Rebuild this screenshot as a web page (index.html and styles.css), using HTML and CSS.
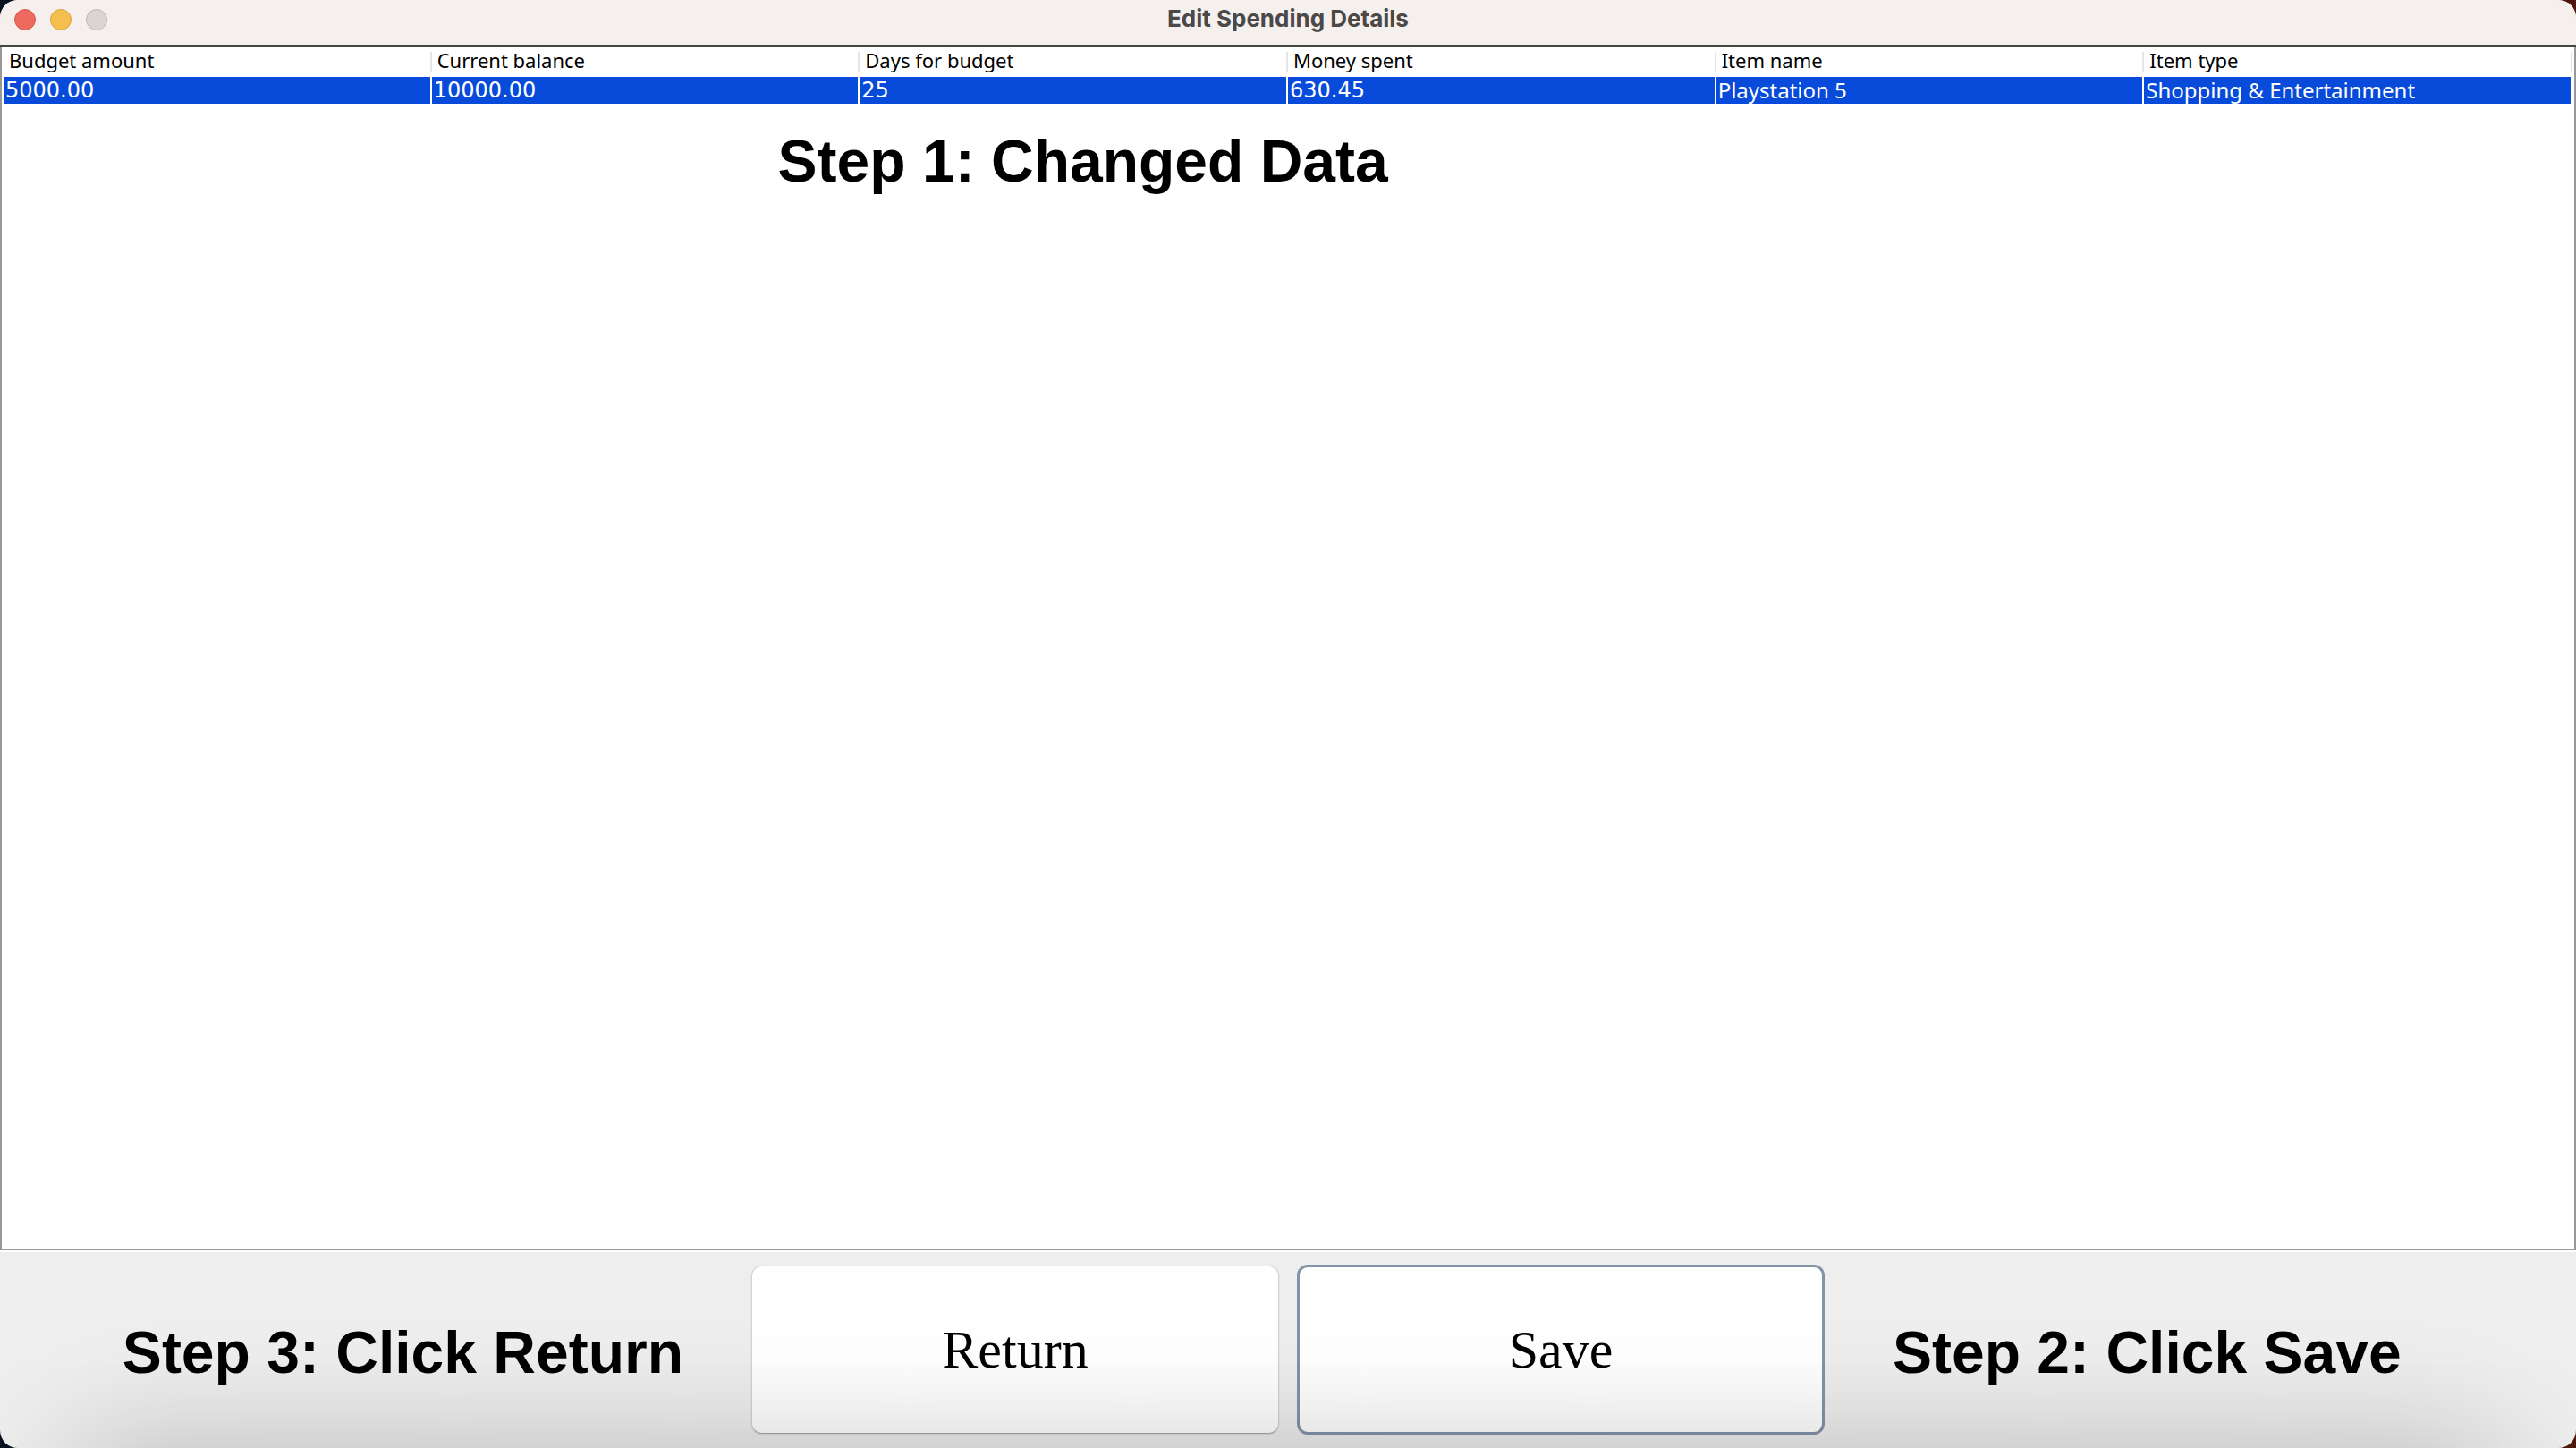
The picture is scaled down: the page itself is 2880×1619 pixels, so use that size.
FILE: index.html
```html
<!DOCTYPE html>
<html lang="en">
<head>
<meta charset="utf-8">
<title>Edit Spending Details</title>
<link rel="stylesheet" href="styles.css">
</head>
<body>
<div class="window">
  <header class="titlebar">
    <div class="controls">
      <button class="control control-close" type="button" aria-label="Close"></button>
      <button class="control control-minimize" type="button" aria-label="Minimize"></button>
      <button class="control control-zoom" type="button" aria-label="Zoom" disabled></button>
    </div>
    <h1 class="title">Edit Spending Details</h1>
  </header>
  <main class="content">
    <table class="spending">
      <thead>
        <tr>
          <th scope="col"><span class="label">Budget amount</span></th>
          <th scope="col"><span class="label">Current balance</span></th>
          <th scope="col"><span class="label">Days for budget</span></th>
          <th scope="col"><span class="label">Money spent</span></th>
          <th scope="col"><span class="label">Item name</span></th>
          <th scope="col"><span class="label">Item type</span></th>
        </tr>
      </thead>
      <tbody>
        <tr>
          <td class="number">5000.00</td>
          <td class="number">10000.00</td>
          <td class="number">25</td>
          <td class="number">630.45</td>
          <td>Playstation 5</td>
          <td>Shopping &amp; Entertainment</td>
        </tr>
      </tbody>
    </table>
    <p class="step step-data">Step 1: Changed Data</p>
  </main>
  <footer class="actions">
    <p class="step step-return">Step 3: Click Return</p>
    <div class="buttons">
      <button class="action" type="button">Return</button>
      <button class="action action-default" type="button">Save</button>
    </div>
    <p class="step step-save">Step 2: Click Save</p>
  </footer>
</div>
</body>
</html>
```
FILE: styles.css
```css
* {
  box-sizing: border-box;
}

body {
  margin: 0;
  background: linear-gradient(90deg, #06101e 50%, #4d170d 50%);
}

.window {
  display: flex;
  flex-direction: column;
  min-height: 100vh;
  overflow: hidden;
  border-radius: 20px;
  background: #eeeeee;
  color: #000;
}

.titlebar {
  display: grid;
  grid-template-columns: 1fr auto 1fr;
  align-items: center;
  height: 52px;
  padding: 0 16px 6px;
  border-bottom: 2px solid #474545;
  background: #f5efed;
}

.controls {
  display: flex;
  gap: 16px;
}

.control {
  width: 24px;
  height: 24px;
  padding: 0;
  border: 1px solid;
  border-radius: 50%;
}

.control-close {
  border-color: #d65a50;
  background: #ed6a5f;
}

.control-minimize {
  border-color: #d9a23f;
  background: #f5bf4f;
}

.control-zoom {
  border-color: #bdb8b6;
  background: #dad5d3;
}

.title {
  margin: 0;
  padding-bottom: 2px;
  font: 700 26px/32px Inter, sans-serif;
  color: #4b4848;
}

.content {
  flex: 1;
  padding: 0 2px;
  border: solid #999;
  border-width: 0 2px 2px;
  background: #fff;
}

.spending {
  width: 100%;
  table-layout: fixed;
  border-collapse: separate;
  border-spacing: 0;
  font-family: "Noto Sans", sans-serif;
}

.spending th {
  padding: 6px 0;
  text-align: left;
  font-weight: 400;
}

.label {
  display: block;
  padding: 0 0 4px 6px;
  border-right: 2px solid #e5e5e5;
  font-size: 22px;
  line-height: 18px;
}

.spending td {
  height: 30px;
  padding: 0 0 0 2px;
  border-right: 2px solid #fff;
  background: #084bdb;
  color: #fff;
  font-size: 24px;
  line-height: 30px;
  white-space: nowrap;
}

.spending .number {
  font-family: "DejaVu Sans", sans-serif;
}

.step {
  margin: 0;
  font: 700 66px/76px "Liberation Sans", Arial, sans-serif;
}

.step-data {
  padding: 26px 0 0 calc(30% + 4px);
}

.actions {
  position: relative;
  display: grid;
  grid-template-columns: 1fr auto 1fr;
  padding: 14px 0 15px;
  border-top: 2px solid #fff;
}

/* Soft shade rising from the bottom edge of the window */
.actions::after {
  content: "";
  position: absolute;
  top: 100%;
  left: 80px;
  right: 80px;
  height: 200px;
  border-radius: 40px;
  box-shadow: 0 0 140px rgba(0, 0, 0, 0.24);
  pointer-events: none;
}

.step-return {
  padding: 60px 76px 0 0;
  text-align: right;
}

.step-save {
  padding: 60px 0 0 76px;
}

.buttons {
  display: flex;
  align-items: center;
  gap: 20px;
}

.action {
  width: 590px;
  height: 188px;
  padding: 0;
  border: 1px solid #d2d2d2;
  border-bottom-color: #aaa;
  border-radius: 12px;
  background: #fff;
  box-shadow: 0 1px 2px rgba(0, 0, 0, 0.12);
  font: 60px/68px "Liberation Serif", "Times New Roman", serif;
  color: #000;
}

.action-default {
  height: 190px;
  border: 3px solid #8294a8;
  box-shadow: none;
}
```
